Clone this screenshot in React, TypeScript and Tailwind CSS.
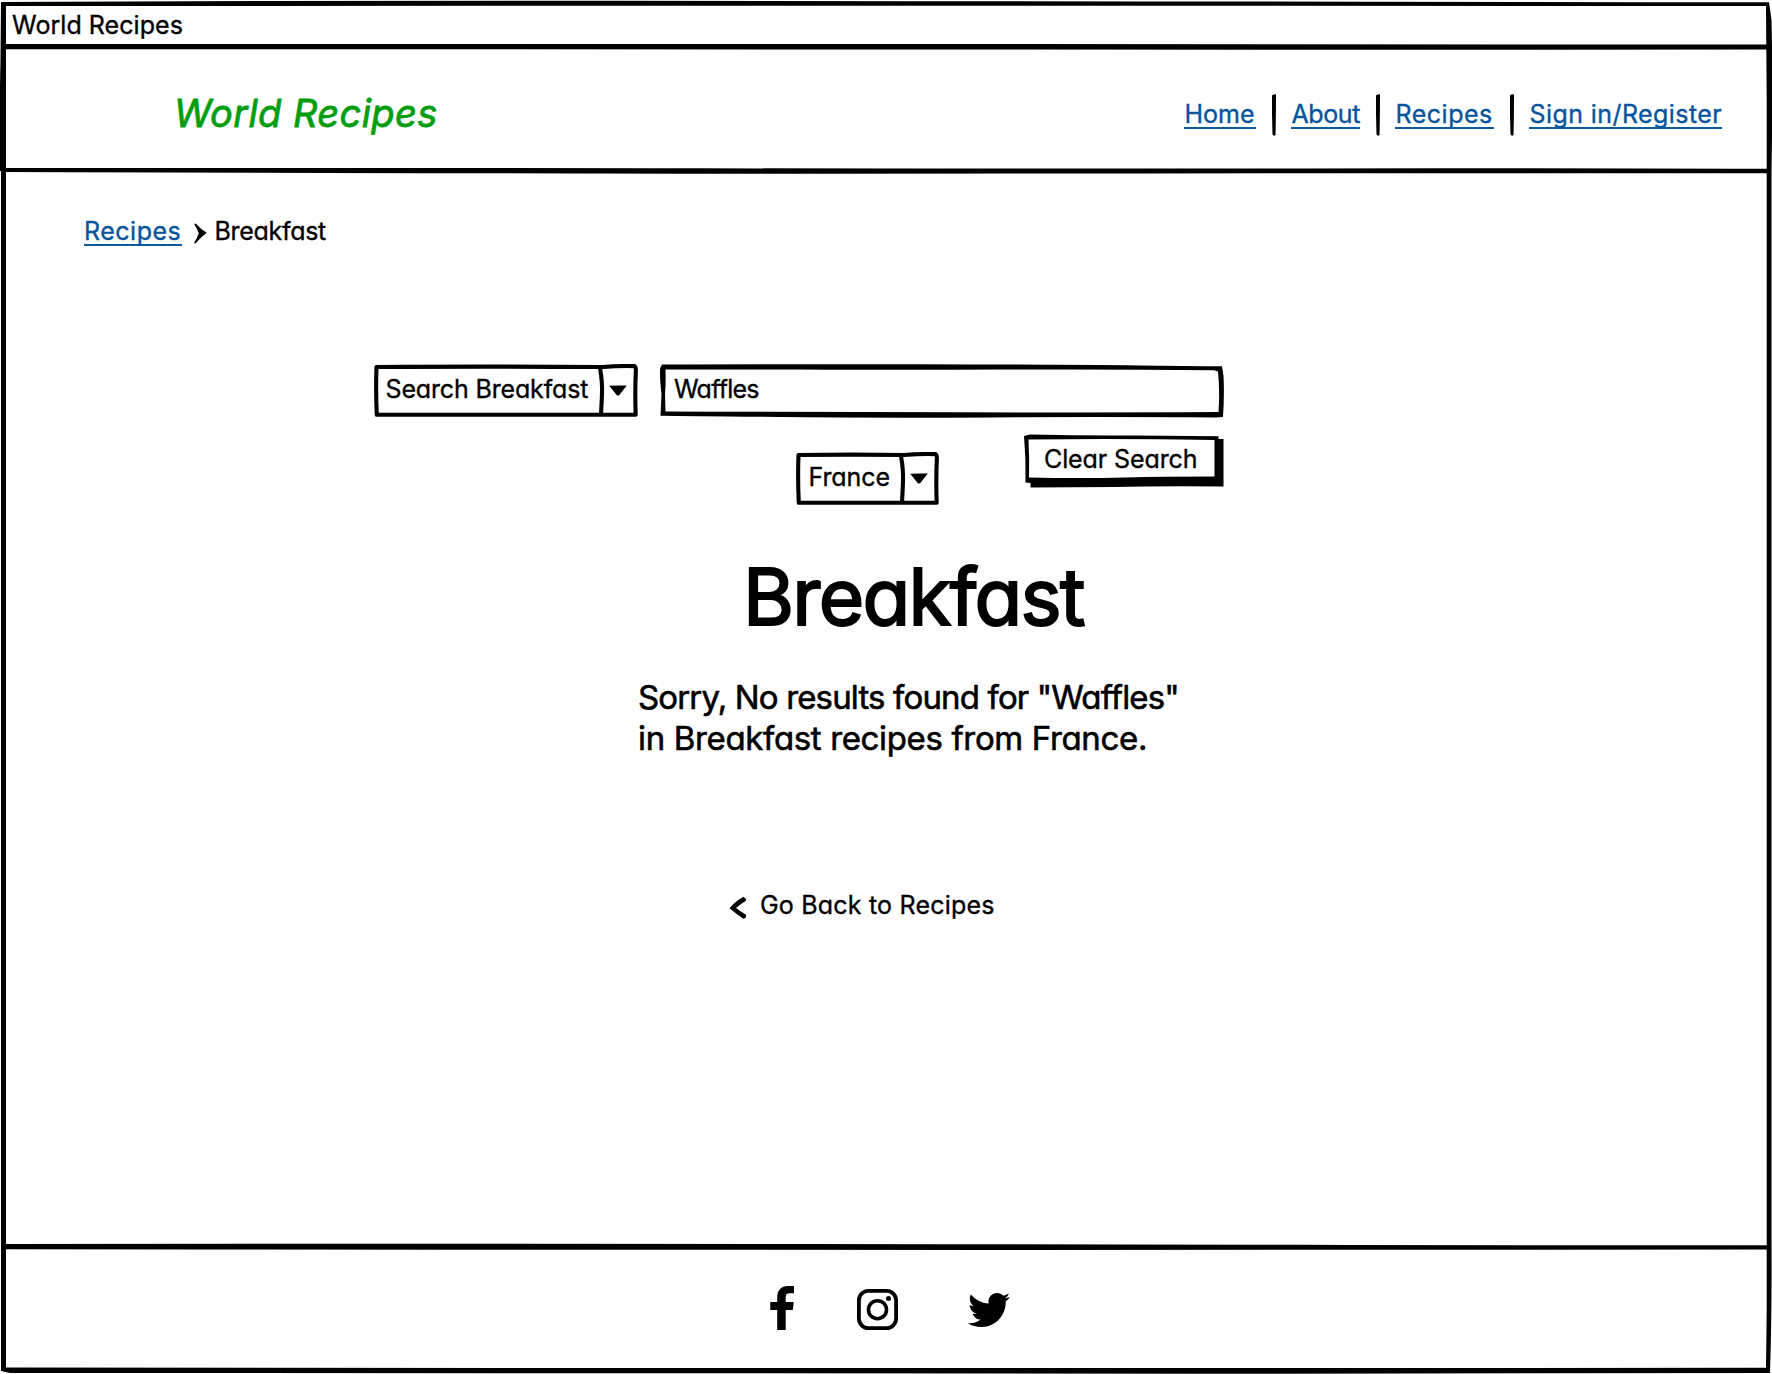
import React from 'react';
import { FaTwitter } from 'react-icons/fa';

function WindowFrame() {
  return (
    <svg className="pointer-events-none absolute inset-0" width="1772" height="1374" viewBox="0 0 1772 1374">
      {/* outer edges */}
      <path d="M1 2Q300 0.600 620 0.800T1180 1.400T1769 2.200L1771.500 20Q1773 80 1771.500 172V1240Q1772 1310 1770 1373L1200 1373.800Q600 1373 10 1373L1 1371L1 1200V172Q-1 120 0.500 60ZM6 6V1367.500Q500 1368 1000 1368T1766 1367.800L1766.700 1310V100L1766 6Q1100 5.800 800 5.800T6 6Z" fill="#000" fillRule="evenodd" />
      <path d="M0 90Q-1 130 0 171L6 173V80Z" fill="#000" />
      {/* title bar, header and footer rules */}
      <path d="M5 44Q400 43.800 800 44T1767 44.600L1767 49.600Q1200 49.700 900 49.500T5 49.200Z" fill="#000" />
      <path d="M3 168Q300 167.800 700 168.300T1300 168.400T1767 168.800V173.200Q1400 173 1100 173.500T600 173.500T3 172Z" fill="#000" />
      <path d="M5 1244Q400 1243.600 800 1244T1300 1244.800T1767 1245.200V1249.600Q1300 1249.900 1000 1249.900T5 1249.300Z" fill="#000" />
    </svg>
  );
}

function Link({ className, children }: { className: string; children: React.ReactNode }) {
  return (
    <a href="#" className={'block h-[29px] whitespace-nowrap border-b-2 border-[#0b5a9d] pl-[0.500px] leading-[28px] text-[#06549b] ' + className}>
      {children}
    </a>
  );
}

function Divider() {
  return (
    <svg className="mt-px shrink-0" width="4" height="42" viewBox="0 0 4 42">
      <path d="M0 1.500Q2 -0.500 4 0.500L3.900 22L3.500 41Q1.800 42.500 0.500 40.500L0 20Z" />
    </svg>
  );
}

function Select({ width, className, children }: { width: number; className: string; children: React.ReactNode }) {
  const w = width;
  return (
    <button className={'relative flex h-[53px] shrink-0 items-center justify-between pr-[11px] pb-1 text-left whitespace-nowrap ' + className}>
      <svg className="absolute inset-0" width={w} height="53" viewBox={`0 0 ${w} 53`} fill="none" stroke="#000" strokeWidth="4.1" strokeLinejoin="round" strokeLinecap="round">
        <path d={`M2.500 3Q${w * 0.4} 2.200 ${w - 35} 3Q${w - 18} 1.700 ${w - 4} 2.100Q${w - 2.100} 2 ${w - 2.100} 6Q${w - 3.2} 28 ${w - 2.300} 50.800Q${w * 0.5} 51 2.800 50.800Q1.600 26 2.500 3Z`} />
        <path d={`M${w - 38} 4Q${w - 35.500} 18 ${w - 36} 30T${w - 37} 50`} />
      </svg>
      <span>{children}</span>
      <svg className="relative top-[2px]" width="18" height="11" viewBox="0 0 18 11">
        <path d="M0.200 0.700Q9 0.200 17.800 0.500L10.300 10Q9 11 7.700 10Z" />
      </svg>
    </button>
  );
}

export default function App() {
  return (
    <div className="relative flex h-[1374px] w-[1772px] flex-col overflow-hidden bg-white font-['Inter',sans-serif] text-[25px] leading-[30px] text-black [-webkit-text-stroke:0.35px] [font-feature-settings:'cv11']">
      <WindowFrame />

      <div className="flex h-[47px] shrink-0 items-center pt-[3px] pl-[12px]">
        <span className="tracking-[0.05px]">World Recipes</span>
      </div>

      <header className="flex h-[124px] shrink-0 items-center justify-between pt-[8px] pr-[50px] pl-[174px]">
        <h1 className="text-[38px] tracking-[0.42px] text-[#009e0f] italic [-webkit-text-stroke:0.8px]">World Recipes</h1>
        <nav className="flex items-center gap-[15.500px] pt-[2px] text-[#06549b]">
          <Link className="w-[72px]">Home</Link>
          <Divider />
          <Link className="w-[69px] tracking-[-0.4px]">About</Link>
          <Divider />
          <Link className="w-[99px] tracking-[0.5px]">Recipes</Link>
          <Divider />
          <Link className="w-[193px] tracking-[0.42px]">Sign in/Register</Link>
        </nav>
      </header>

      <main className="flex h-[1076px] shrink-0 flex-col">
        <div className="mt-[45px] flex h-[30px] items-center pl-[83.500px]">
          <Link className="w-[98.500px] tracking-[0.5px]">Recipes</Link>
          <svg className="mt-1 ml-[12px]" width="13" height="21" viewBox="0 0 13 21">
            <path d="M0.300 1.200Q1 0 2.200 1Q7 6.500 12.800 9.800Q7 14 1.600 20.300Q0.300 20.800 0.300 19.500Q3.500 14.500 4.800 10.300Q3.300 6 0.300 1.200Z" />
          </svg>
          <span className="ml-[7.500px] tracking-[-0.3px]">Breakfast</span>
        </div>

        <div className="mt-[118px] flex h-[53px] gap-[22px] pl-[374px]">
          <Select width={264} className="w-[264px] pl-[11.500px] tracking-[-0.15px]">Search Breakfast</Select>
          <div className="relative flex w-[564px] items-center pb-[3px] pl-[14px] tracking-[-0.75px]">
            <svg className="absolute inset-0" width="564" height="54" viewBox="0 0 564 54">
              <path d="M2 0.500Q120 0 260 0.300T480 1.400T562 2.200L563.500 12Q564.500 30 563 53L556 53.500Q450 52.800 330 53.400T120 53T0.500 51.700L1.500 30Q-0.500 14 0.200 4ZM5.500 5.500Q6 18 5 30L5.500 47.400Q150 48 300 48.300T558.500 48Q560 28 558 7.500L554 6.300Q450 5 340 5.600T140 5.400Z" fillRule="evenodd" />
            </svg>
            <span>Waffles</span>
          </div>
        </div>

        <div className="mt-[17px] flex h-[71px] items-start pl-[796px]">
          <Select width={143} className="mt-[18px] w-[143px] pl-[12.500px] tracking-[-0.1px]">France</Select>
          <button className="relative ml-[85px] flex h-[54px] w-[200px] shrink-0 items-center pb-1 pl-[20px] tracking-[-0.1px] whitespace-nowrap">
            <svg className="absolute inset-0" width="200" height="54" viewBox="0 0 200 54">
              <path d="M0 2L6 0.600Q60 1.800 110 1.500L194.500 2.300V5H199.500V52.500Q130 52 90 53L6.500 53.500V49L1.500 48.500Q2 25 0 2ZM4.500 5.500Q5.500 25 5 43.500Q60 44.500 100 43.500T190.500 42.500V6Q100 4.500 4.500 5.500Z" fillRule="evenodd" />
            </svg>
            <span>Clear Search</span>
          </button>
        </div>

        <h2 className="mt-[51.500px] h-[80px] pl-[743px] text-[78px] leading-[80px] font-normal tracking-[-1.700px] [-webkit-text-stroke:2px]">Breakfast</h2>

        <p className="mt-[40.500px] pl-[638px] text-[33px] leading-[41px] whitespace-nowrap [-webkit-text-stroke:0.6px]">
          <span className="block tracking-[-0.85px]">Sorry, No results found for "Waffles"</span>
          <span className="block tracking-[-0.35px]">in Breakfast recipes from France.</span>
        </p>

        <a href="#" className="mt-[130.500px] flex h-[30px] items-center pl-[729px]">
          <svg className="mt-[5px]" width="18" height="23" viewBox="0 0 18 23">
            <path d="M14.500 0.800L17.300 3.200L16.500 5Q11.500 8 7 12Q12 15.500 17.300 19L16.500 22L14.500 22.700Q7 18 0.500 12.300Q6 5.500 14.500 0.800Z" />
          </svg>
          <span className="ml-[13px] tracking-[0.2px]">Go Back to Recipes</span>
        </a>
      </main>

      <footer className="flex flex-1 items-start pt-[39px] pl-[770px]">
        <svg width="24" height="44" viewBox="0 0 24 44">
          <path d="M7.200 44V24H0.300V16H7.200V11.500C7.200 4.500 11 0 18 0H24V7.200H19.500C16.500 7.200 15.700 8.500 15.700 11V16H23.800L22.800 24H15.700V44Z" />
        </svg>
        <svg className="mt-[3px] ml-[63px]" width="41" height="41" viewBox="0 0 41 41" fill="none" stroke="#000">
          <rect x="1.900" y="1.900" width="37.200" height="37.200" rx="9.500" strokeWidth="3.800" />
          <circle cx="20.500" cy="20.700" r="9" strokeWidth="3.600" />
          <circle cx="31.500" cy="9.500" r="2.500" fill="#000" stroke="none" />
        </svg>
        <FaTwitter className="mt-[2.500px] ml-[70px]" size={42} />
      </footer>
    </div>
  );
}
